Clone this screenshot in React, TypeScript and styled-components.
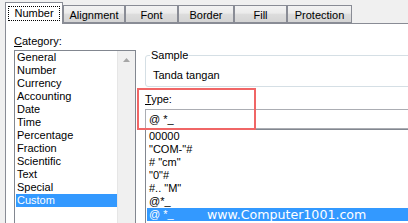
import React from 'react';
import styled, { createGlobalStyle } from 'styled-components';

const GlobalStyle = createGlobalStyle`
    html, body {
        margin: 0;
        padding: 0;
        background: #f0f0f0;
    }
    body {
        font-family: 'Liberation Sans', Arial, sans-serif;
        font-size: 11px;
        color: #000;
    }
`;

const Dialog = styled.div`
    position: relative;
    width: 408px;
    height: 223px;
    overflow: hidden;
    background: #f0f0f0;
`;

const TabStrip = styled.div`
    display: flex;
    align-items: flex-end;
    height: 23px;
    padding-left: 5px;
    box-sizing: border-box;
`;

const Tab = styled.div<{ $width: number; $active?: boolean }>`
    position: relative;
    z-index: ${p => (p.$active ? 1 : 0)};
    display: flex;
    align-items: center;
    justify-content: center;
    box-sizing: border-box;
    width: ${p => p.$width}px;
    height: ${p => (p.$active ? 22 : 18)}px;
    margin-bottom: ${p => (p.$active ? -1 : 0)}px;
    padding-top: ${p => (p.$active ? 0 : 1)}px;
    border: 1px solid #898c95;
    border-bottom: ${p => (p.$active ? 'none' : '1px solid #898c95')};
    background: ${p =>
        p.$active ? '#ffffff' : 'linear-gradient(#f3f3f3, #ebebeb 45%, #dddddd 50%, #d4d4d4)'};
    white-space: nowrap;
`;

const FocusLabel = styled.span`
    padding: 0 5px;
    line-height: 13px;
    border: 1px dotted #000;
`;

const Panel = styled.div`
    display: flex;
    height: 200px;
    margin-left: 5px;
    padding-left: 8px;
    background: #ffffff;
    border-top: 1px solid #898c95;
    border-left: 1px solid #898c95;
`;

const LeftCol = styled.div`
    display: flex;
    flex-direction: column;
    width: 122px;
    flex-shrink: 0;
    padding-top: 11px;
`;

const Label = styled.div`
    line-height: 13px;
    height: 13px;
`;

const CategoryList = styled.div`
    display: flex;
    margin-top: 2px;
    height: 190px;
    border: 1px solid #828790;
    box-sizing: border-box;
`;

const Items = styled.div`
    flex: 1;
    padding-left: 1px;
`;

const Row = styled.div<{ $selected?: boolean; $pad?: number }>`
    height: 13px;
    line-height: 13px;
    padding-left: ${p => p.$pad ?? 1}px;
    white-space: nowrap;
    background: ${p => (p.$selected ? '#3399ff' : 'transparent')};
    color: ${p => (p.$selected ? '#ffffff' : '#000000')};
`;

const ScrollBar = styled.div`
    display: flex;
    justify-content: center;
    width: 18px;
    flex-shrink: 0;
    padding-top: 7px;
    box-sizing: border-box;
    background: #f0f0f0;
    border-left: 1px solid #e6e6e6;
`;

const RightCol = styled.div`
    display: flex;
    flex-direction: column;
    width: 300px;
    flex-shrink: 0;
    margin-left: 9px;
    padding-top: 24px;
`;

const GroupBox = styled.fieldset`
    margin: 0;
    min-width: 0;
    padding: 7px 0 4px 7px;
    border: 1px solid #d5dfe5;
    border-radius: 3px;
`;

const GroupTitle = styled.legend`
    margin-left: -3px;
    padding: 0 1px;
    line-height: 14px;
`;

const SampleText = styled.div`
    line-height: 13px;
`;

const TypeSection = styled.div`
    position: relative;
    margin-top: 6px;
`;

const TypeInput = styled.div`
    margin-top: 3px;
    height: 20px;
    box-sizing: border-box;
    padding-left: 3px;
    line-height: 18px;
    border: 1px solid #abadb3;
    border-right: none;
`;

// red annotation drawn over the Type field
const Callout = styled.div`
    position: absolute;
    left: -8px;
    top: -5px;
    width: 119px;
    height: 42px;
    box-sizing: border-box;
    border: 2px solid #f06666;
`;

const FormatList = styled.div`
    height: 100px;
    padding-left: 1px;
    border: 1px solid #828790;
    border-right: none;
`;

const Watermark = styled.div`
    position: absolute;
    left: 207px;
    top: 208px;
    line-height: 14px;
    font-family: 'DejaVu Sans', Verdana, sans-serif;
    font-size: 12.6px;
    color: #ffffff;
    white-space: nowrap;
`;

const tabs = [
    { text: 'Number', width: 58, active: true },
    { text: 'Alignment', width: 62 },
    { text: 'Font', width: 53 },
    { text: 'Border', width: 56 },
    { text: 'Fill', width: 53 },
    { text: 'Protection', width: 65 }
];

const categories = [
    'General',
    'Number',
    'Currency',
    'Accounting',
    'Date',
    'Time',
    'Percentage',
    'Fraction',
    'Scientific',
    'Text',
    'Special',
    'Custom'
];

const formats = ['00000', '"COM-"#', '# "cm"', '"0"#', '#.. "M"', '@*_', '@ *_'];

const App = () => {
    return (
        <>
            <GlobalStyle />
            <Dialog>
                <TabStrip>
                    {tabs.map(t => (
                        <Tab key={t.text} $width={t.width} $active={t.active}>
                            {t.active ? <FocusLabel>{t.text}</FocusLabel> : t.text}
                        </Tab>
                    ))}
                </TabStrip>

                <Panel>
                    <LeftCol>
                        <Label>
                            <u>C</u>ategory:
                        </Label>
                        <CategoryList>
                            <Items>
                                {categories.map(c => (
                                    <Row key={c} $selected={c === 'Custom'}>
                                        {c}
                                    </Row>
                                ))}
                            </Items>
                            <ScrollBar>
                                <svg width="7" height="4" viewBox="0 0 7 4">
                                    <path d="M0 4 L3.5 0 L7 4 Z" fill="#a6a6a6" />
                                </svg>
                            </ScrollBar>
                        </CategoryList>
                    </LeftCol>

                    <RightCol>
                        <GroupBox>
                            <GroupTitle>Sample</GroupTitle>
                            <SampleText>Tanda tangan</SampleText>
                        </GroupBox>

                        <TypeSection>
                            <Label>
                                <u>T</u>ype:
                            </Label>
                            <TypeInput>@ *_</TypeInput>
                            <Callout />
                        </TypeSection>

                        <FormatList>
                            {formats.map(f => (
                                <Row key={f} $pad={2} $selected={f === '@ *_'}>
                                    {f}
                                </Row>
                            ))}
                        </FormatList>
                    </RightCol>
                </Panel>

                <Watermark>www.Computer1001.com</Watermark>
            </Dialog>
        </>
    );
};

export default App;
